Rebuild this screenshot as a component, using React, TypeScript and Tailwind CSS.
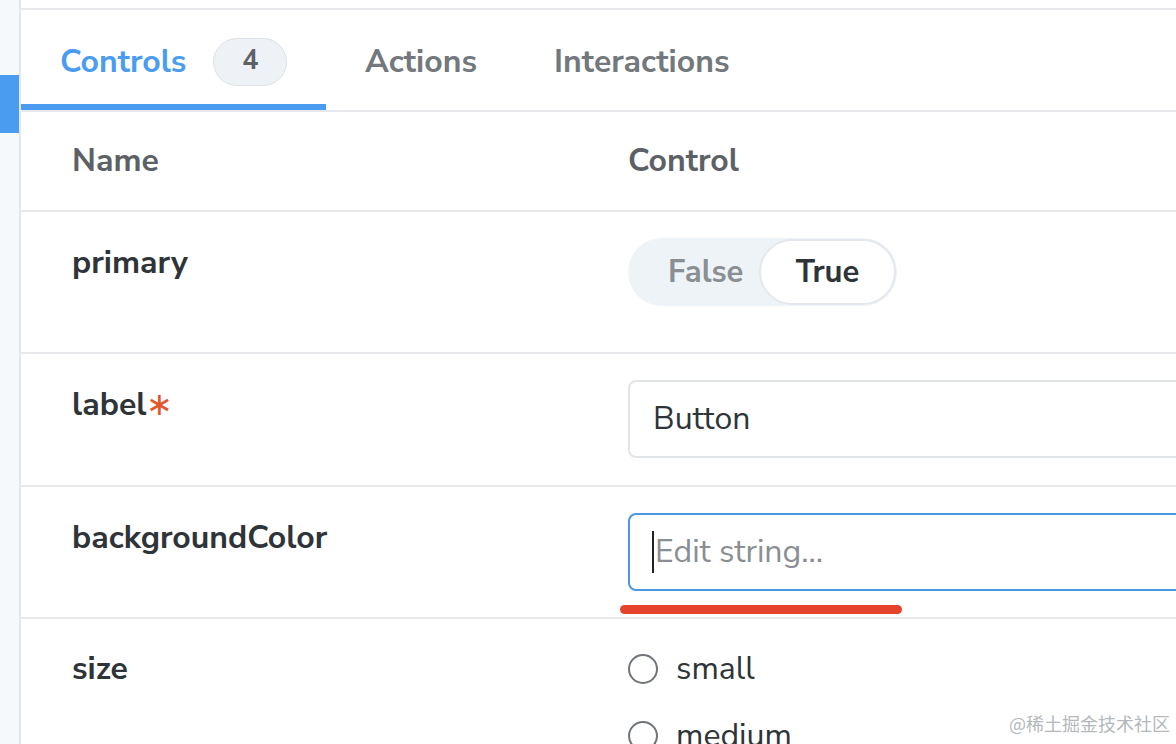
import React from 'react';

const font = { fontFamily: '"Nunito Sans", Lato, "Noto Sans", sans-serif' };

const Row: React.FC<{ name: React.ReactNode; height: string; children: React.ReactNode }> = ({ name, height, children }) => (
  <div className={`flex border-b-2 border-[#e6e8eb] ${height}`}>
    <div className="w-[607px] shrink-0 pl-[51px] pt-[26px] text-[32px] leading-[50px] font-bold text-[#2e3438]">{name}</div>
    <div className="flex-1 pt-[26px]">{children}</div>
  </div>
);

const Radio: React.FC<{ label: string }> = ({ label }) => (
  <div className="flex items-center gap-[18px] h-[50px]">
    <span className="w-[30px] h-[30px] rounded-full border-[2.5px] border-[#6f7479] bg-white" />
    <span className="text-[32px] text-[#2e3438]">{label}</span>
  </div>
);

export default function App() {
  return (
    <div className="w-[1176px] h-[744px] overflow-hidden flex bg-white relative" style={font}>
      {/* sidebar edge */}
      <div className="w-[19px] shrink-0 bg-[#f6f9fc] border-r-2 border-[#e4e7ea] box-content">
        <div className="mt-[75px] h-[58px] bg-[#4a9cf0]" />
      </div>

      <div className="flex-1 min-w-0 flex flex-col">
        <div className="h-[8px] shrink-0 border-b-2 border-[#e6e8eb] box-content" />

        {/* tabs */}
        <div className="h-[100px] shrink-0 flex items-stretch border-b-2 border-[#e6e8eb] box-content -mb-[2px]">
          <div className="w-[305px] pl-[39px] flex items-center gap-[27px] border-b-[6px] border-[#4a9cf0] pt-[9px]">
            <span className="text-[32px] font-bold text-[#4a9cf0]">Controls</span>
            <span className="w-[74px] h-[48px] rounded-full bg-[#eef2f6] border border-[#dde2e7] flex items-center justify-center text-[27px] font-bold text-[#5c6166]">4</span>
          </div>
          <div className="pl-[39px] pt-[3px] flex items-center text-[32px] font-bold text-[#73787d]">Actions</div>
          <div className="pl-[77px] pt-[3px] flex items-center text-[32px] font-bold text-[#73787d]">Interactions</div>
        </div>

        {/* header */}
        <div className="flex h-[102px] shrink-0 border-b-2 border-t-2 border-t-transparent border-[#e6e8eb] items-center text-[32px] font-bold text-[#5c6166]">
          <div className="w-[607px] pl-[51px]">Name</div>
          <div>Control</div>
        </div>

        <Row name="primary" height="h-[142px] shrink-0">
          <div className="w-[269px] h-[68px] rounded-full bg-[#eef3f8] flex items-center pr-[1px]">
            <span className="flex-1 pl-[40px] text-[31px] font-bold text-[#8a8f94]">False</span>
            <span className="w-[137px] h-[66px] rounded-full bg-white border-2 border-[#e4e8ec] flex items-center justify-center text-[31px] font-bold text-[#2e3438]">True</span>
          </div>
        </Row>

        <Row name={<>label<span className="text-[#e2582a] font-normal">∗</span></>} height="h-[133px] shrink-0">
          <div className="w-[700px] h-[78px] rounded-[8px] border-2 border-[#e2e5e8] flex items-center pl-[23px] text-[32px] text-[#2e3438]">Button</div>
        </Row>

        <Row name="backgroundColor" height="h-[132px] shrink-0">
          <div className="relative">
            <div className="w-[700px] h-[78px] rounded-[8px] border-[2.5px] border-[#4a97e8] flex items-center pl-[22px] text-[32px] text-[#8a8f94]">
              <span className="w-[2px] h-[42px] bg-[#1f2326] mr-[1px]" />
              Edit string...
            </div>
            <div className="absolute left-[-8px] top-[92px] w-[282px] h-[9px] rounded-full bg-[#e5432c]" />
          </div>
        </Row>

        <div className="flex flex-1">
          <div className="w-[607px] shrink-0 pl-[51px] pt-[25px] text-[32px] leading-[50px] font-bold text-[#2e3438]">size</div>
          <div className="pt-[25px] flex flex-col gap-[17px]">
            <Radio label="small" />
            <Radio label="medium" />
          </div>
        </div>
      </div>

      <div
        className="absolute right-[6px] bottom-[7px] text-[18px] text-[#b4b8bc]"
        style={{ fontFamily: '"Noto Sans CJK SC", sans-serif' }}
      >
        @稀土掘金技术社区
      </div>
    </div>
  );
}
